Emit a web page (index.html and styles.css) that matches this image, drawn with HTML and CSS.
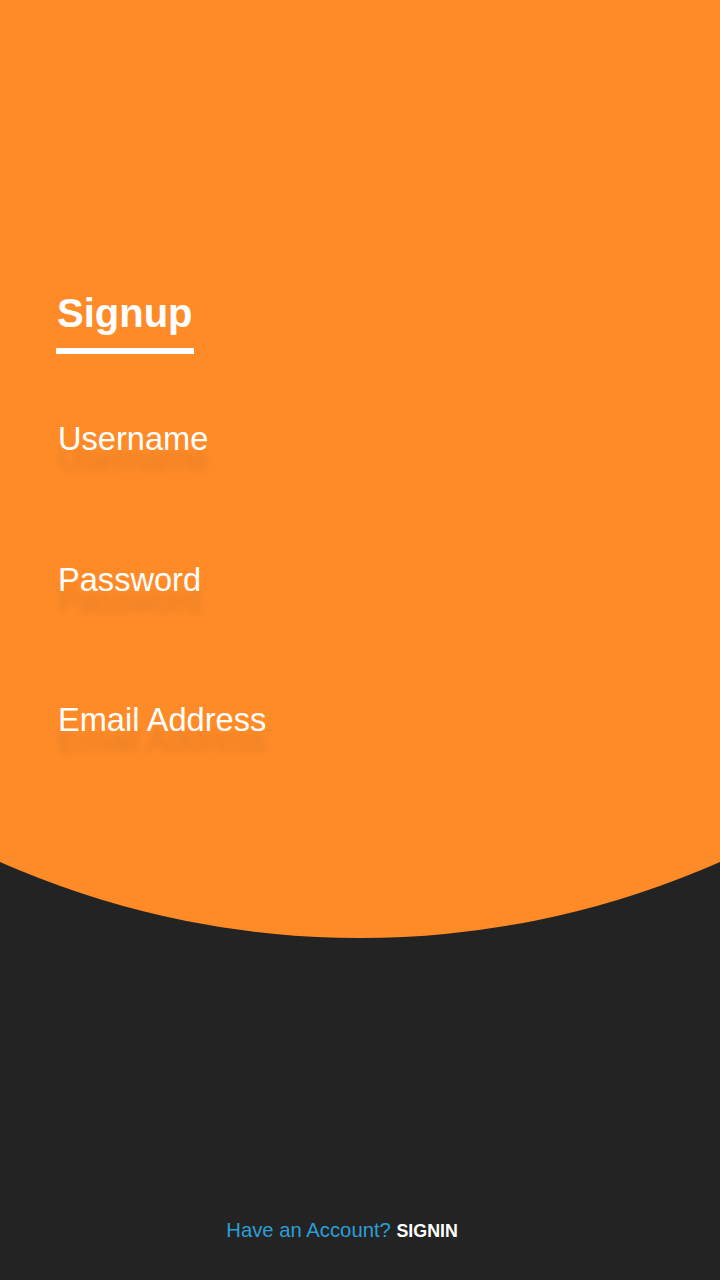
FILE: index.html
```html
<!DOCTYPE html>
<html lang="en">
<head>
<meta charset="utf-8">
<title>Signup</title>
<link rel="stylesheet" href="styles.css">
</head>
<body>
<div class="page">
  <section class="hero">
    <h1 class="title">Signup</h1>
    <form class="fields">
      <label class="field">Username</label>
      <label class="field">Password</label>
      <label class="field">Email Address</label>
    </form>
  </section>
  <footer class="footer">
    <span class="ask">Have an Account?</span> <a class="signin" href="#">SIGNIN</a>
  </footer>
</div>
</body>
</html>
```
FILE: styles.css
```css
html, body {
  margin: 0;
  padding: 0;
}
body {
  background: #232323;
  font-family: "Liberation Sans", Arial, sans-serif;
}
.page {
  min-height: 1280px;
  display: flex;
  flex-direction: column;
}
.hero {
  height: 938px;
  background: #ff8b28;
  clip-path: circle(890px at 360px 48px);
  padding: 290px 0 0 56px;
  box-sizing: border-box;
}
.title {
  display: inline-block;
  margin: 0;
  padding: 0 1px 12px 1px;
  font-size: 40px;
  line-height: 46px;
  font-weight: bold;
  color: #fff;
  border-bottom: 6px solid #fff;
}
.fields {
  display: flex;
  flex-direction: column;
  gap: 103.5px;
  margin-top: 66px;
}
.field {
  display: block;
  padding-left: 2px;
  font-size: 32.6px;
  line-height: 37px;
  color: #fff;
  text-shadow: 0 21px 7px rgba(0, 0, 0, 0.1);
}
.footer {
  margin-top: auto;
  padding: 0 36px 37px 0;
  text-align: center;
  font-size: 20.3px;
  line-height: 23px;
}
.ask {
  color: #2b9fd8;
}
.signin {
  color: #fff;
  font-weight: bold;
  font-size: 17.8px;
  text-decoration: none;
}
```
